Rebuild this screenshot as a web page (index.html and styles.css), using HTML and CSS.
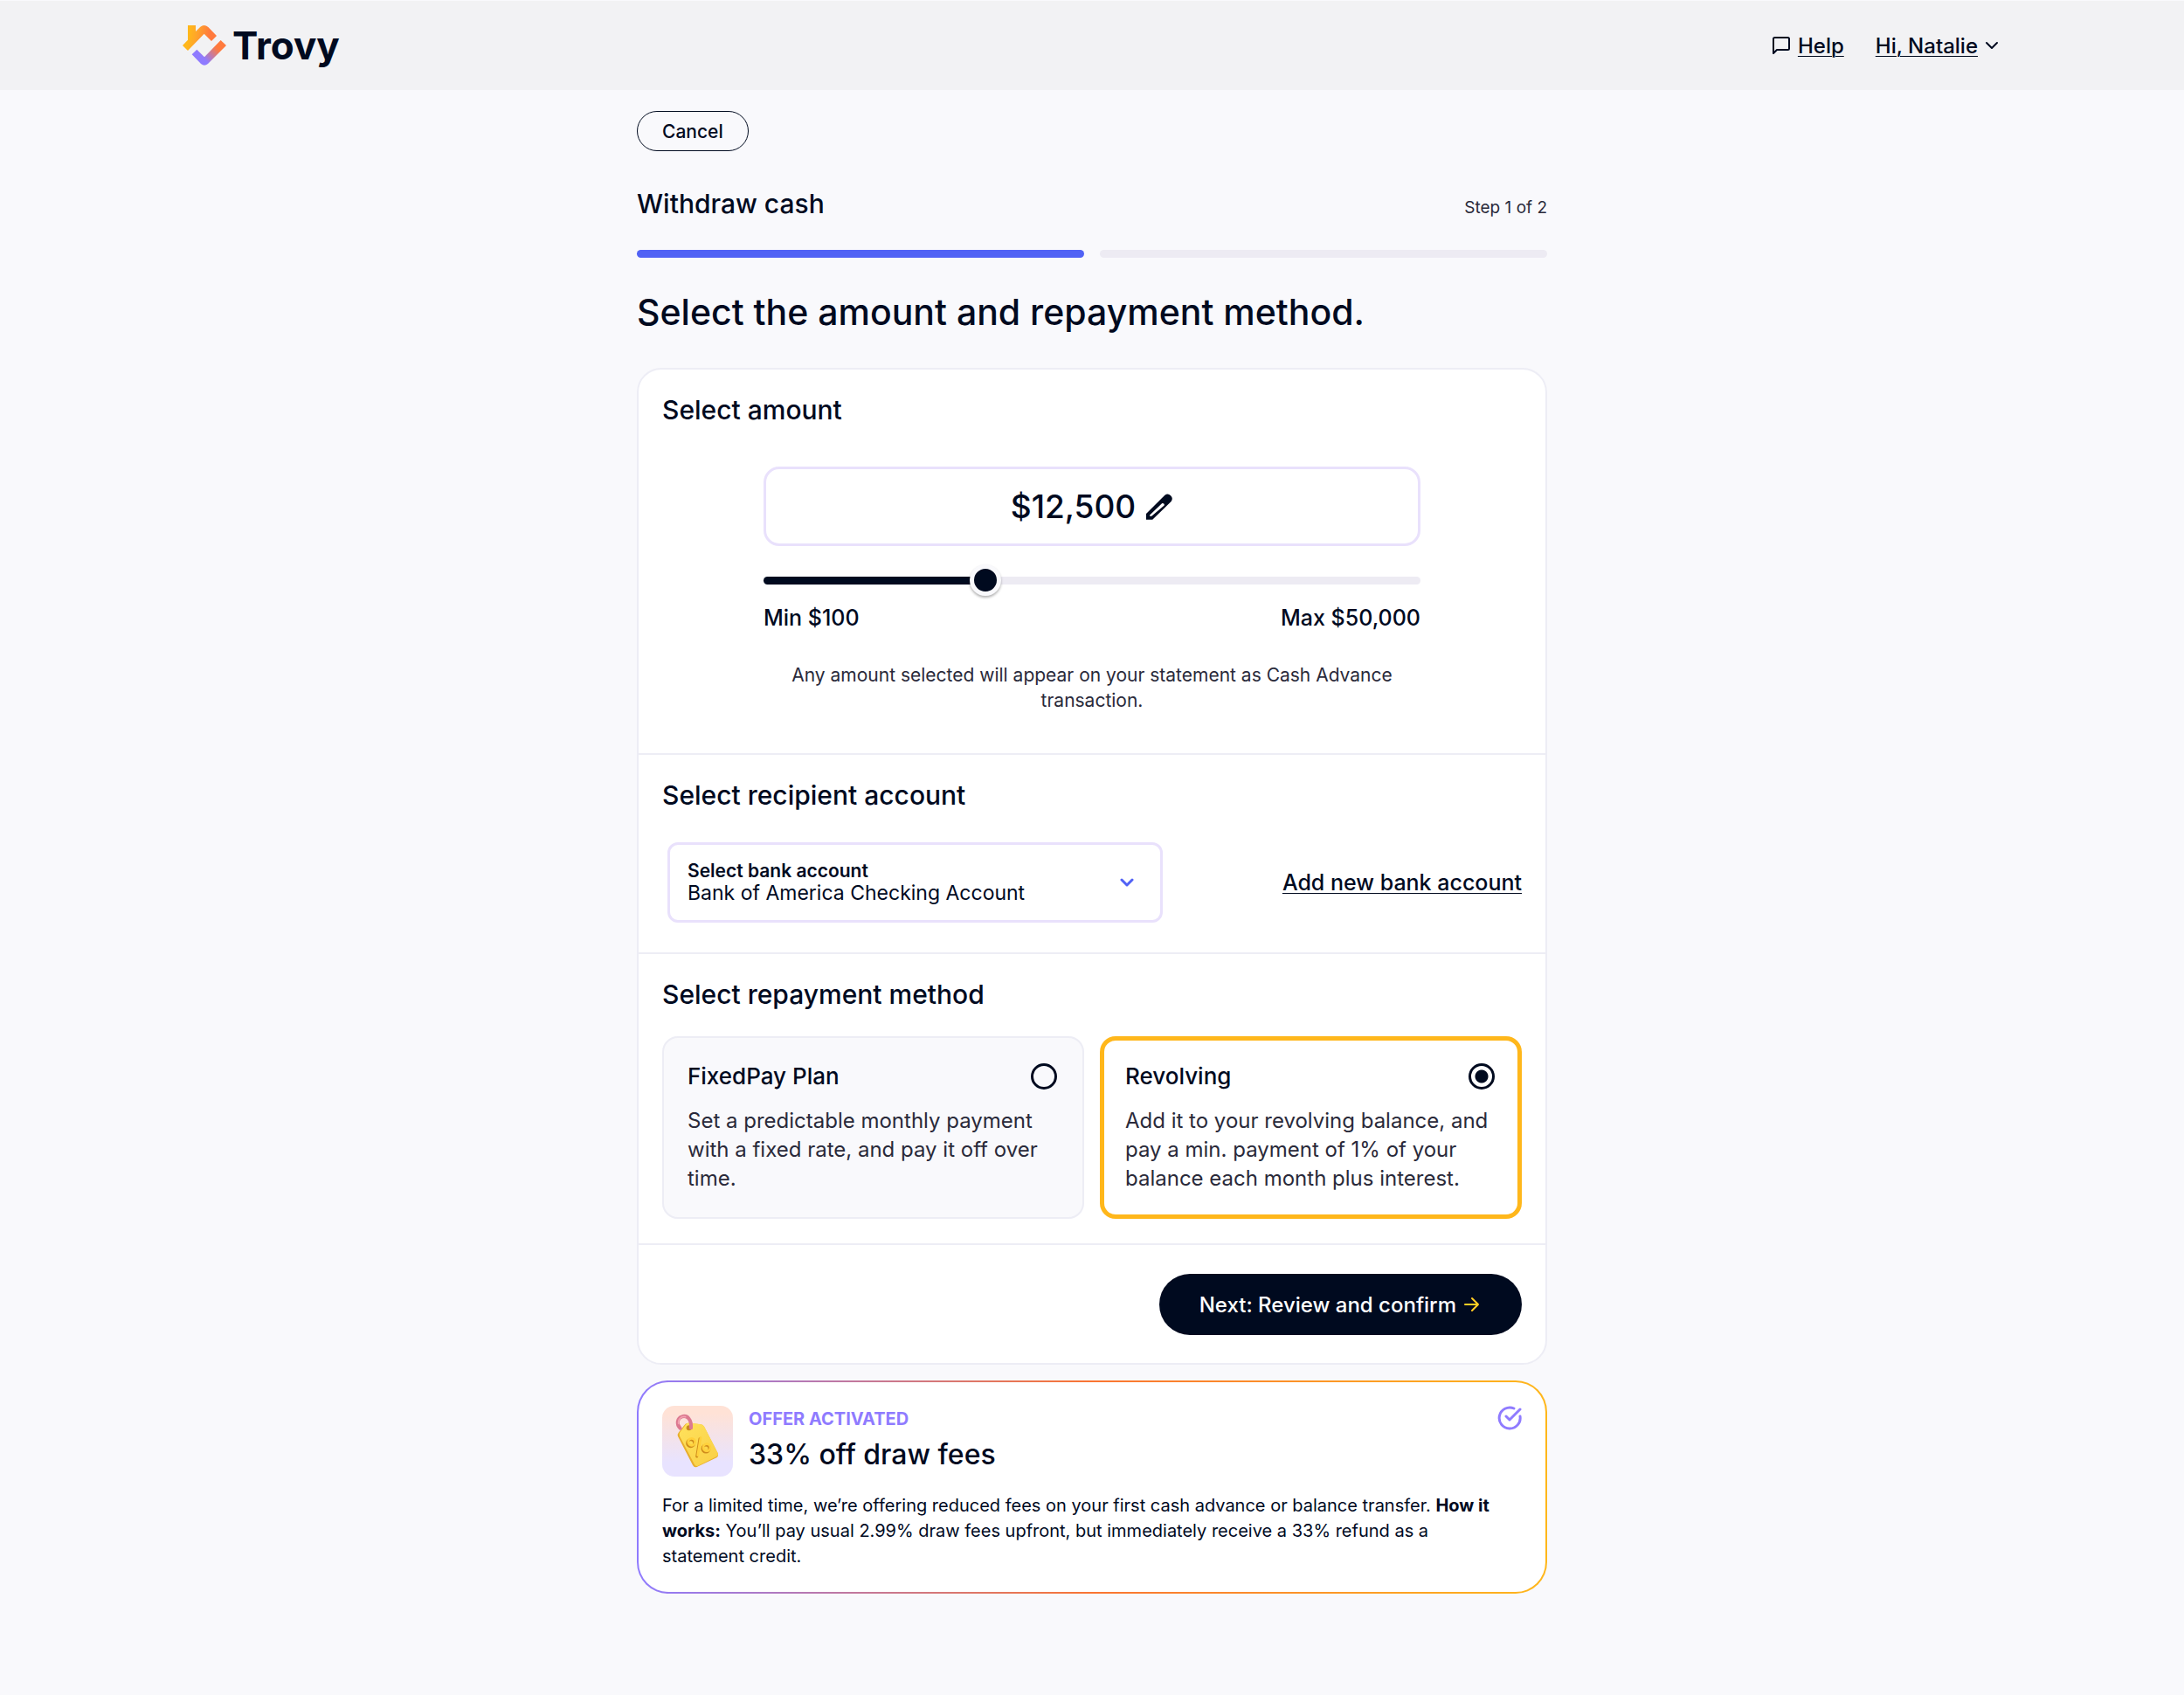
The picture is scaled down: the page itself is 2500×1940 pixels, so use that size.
FILE: index.html
```html
<!DOCTYPE html>
<html lang="en">
<head>
    <title>Trovy - Withdraw cash</title>
    <meta charset="utf-8">
    <meta name="viewport" content="width=device-width, initial-scale=1">
    <link rel="stylesheet" href="styles.css">
</head>
<body>
    <header class="header">
        <div class="header-inner">
            <a class="logo" href="#">
                <svg width="50" height="46" viewBox="57 86 150 138" aria-hidden="true">
                    <defs>
                        <linearGradient id="roof" gradientUnits="userSpaceOnUse" x1="80" y1="110" x2="165" y2="125">
                            <stop offset="0" stop-color="#ffb71b"/>
                            <stop offset="0.3" stop-color="#ffa52a"/>
                            <stop offset="0.8" stop-color="#ff7a3d"/>
                        </linearGradient>
                        <linearGradient id="base" gradientUnits="userSpaceOnUse" x1="130" y1="200" x2="172" y2="160">
                            <stop offset="0" stop-color="#8f7bff"/>
                            <stop offset="1" stop-color="#ff7a3d"/>
                        </linearGradient>
                    </defs>
                    <path fill="url(#roof)" d="M75 86h27v21l16-16q13-10 27 1l29 30-18 18-25-25-56 58-18-18 18-19z"/>
                    <path fill="url(#base)" d="M89 186l17-17 26 26 56-58 19 18-63 63q-12 10-24 0z"/>
                </svg>
                <span>Trovy</span>
            </a>
            <nav class="nav">
                <a class="nav-link" href="#">
                    <svg width="22" height="22" viewBox="0 0 22 22" fill="none" stroke="currentColor" stroke-width="2" stroke-linejoin="round" aria-hidden="true">
                        <path d="M2 20V3.500Q2 2 3.500 2H18.500Q20 2 20 3.500V14.500Q20 16 18.500 16H6z"/>
                    </svg>
                    <span>Help</span>
                </a>
                <a class="nav-link" href="#">
                    <span>Hi, Natalie</span>
                    <svg width="16" height="10" viewBox="0 0 16 10" fill="none" stroke="currentColor" stroke-width="2" stroke-linecap="round" stroke-linejoin="round" aria-hidden="true">
                        <path d="M2 2l6 6 6-6"/>
                    </svg>
                </a>
            </nav>
        </div>
    </header>

    <main class="page">
        <button class="cancel" type="button">Cancel</button>
        <div class="step">
            <h2 class="heading">Withdraw cash</h2>
            <span class="step-count">Step 1 of 2</span>
        </div>
        <div class="progress">
            <span class="bar bar-done"></span>
            <span class="bar"></span>
        </div>
        <h1 class="title">Select the amount and repayment method.</h1>

        <form class="card">
            <section class="section">
                <h2 class="heading">Select amount</h2>
                <div class="amount">
                    <label class="amount-box">
                        <input class="amount-input" type="text" value="$12,500" aria-label="Amount">
                        <svg width="31" height="31" viewBox="0 0 90 90" fill="currentColor" fill-rule="evenodd" aria-hidden="true">
                            <path d="M0 89V70L62 8a15 15 0 0 1 21 21L21 89zM12 78h6L60 42Q62 34 53 35L12 74z"/>
                        </svg>
                    </label>
                    <input class="range" type="range" min="0" max="100" value="33" style="--fill: 33%" aria-label="Amount slider">
                    <div class="limits">
                        <span>Min $100</span>
                        <span>Max $50,000</span>
                    </div>
                    <p class="note">Any amount selected will appear on your statement as Cash Advance transaction.</p>
                </div>
            </section>

            <section class="section">
                <h2 class="heading">Select recipient account</h2>
                <div class="recipient">
                    <div class="bank">
                        <div class="bank-field">
                            <label for="bank">Select bank account</label>
                            <select id="bank">
                                <option>Bank of America Checking Account</option>
                            </select>
                        </div>
                        <svg width="16" height="10" viewBox="0 0 16 10" fill="none" stroke="currentColor" stroke-width="3" stroke-linecap="round" stroke-linejoin="round" aria-hidden="true">
                            <path d="M2 2l6 6 6-6"/>
                        </svg>
                    </div>
                    <a class="add-bank" href="#">Add new bank account</a>
                </div>
            </section>

            <section class="section">
                <h2 class="heading">Select repayment method</h2>
                <div class="methods">
                    <label class="method">
                        <span class="method-top">
                            <span>FixedPay Plan</span>
                            <input class="radio" type="radio" name="method">
                        </span>
                        <span class="method-text">Set a predictable monthly payment with a fixed rate, and pay it off over time.</span>
                    </label>
                    <label class="method method-active">
                        <span class="method-top">
                            <span>Revolving</span>
                            <input class="radio" type="radio" name="method" checked>
                        </span>
                        <span class="method-text">Add it to your revolving balance, and pay a min. payment of 1% of your balance each month plus interest.</span>
                    </label>
                </div>
            </section>

            <div class="actions">
                <button class="next" type="button">
                    Next: Review and confirm
                    <svg width="18" height="18" viewBox="0 0 18 18" fill="none" stroke="#ffcf24" stroke-width="2" stroke-linecap="round" stroke-linejoin="round" aria-hidden="true">
                        <path d="M1 9h15M9 2l7 7-7 7"/>
                    </svg>
                </button>
            </div>
        </form>

        <section class="offer">
            <div class="offer-top">
                <svg class="offer-img" viewBox="0 0 243 243" aria-hidden="true">
                    <defs>
                        <linearGradient id="tile" x1="0" y1="0" x2="0" y2="1">
                            <stop offset="0.1" stop-color="#ffe2d6"/>
                            <stop offset="0.8" stop-color="#e8e3ff"/>
                        </linearGradient>
                        <linearGradient id="tag" x1="0" y1="0" x2="1" y2="1">
                            <stop offset="0" stop-color="#ffe25c"/>
                            <stop offset="1" stop-color="#f9cf45"/>
                        </linearGradient>
                    </defs>
                    <rect width="243" height="243" rx="42" fill="url(#tile)"/>
                    <path d="M56 92L76 67q4-7 12-8l44 5q8 1 12 8l47 91q4 9-4 15l-68 32q-9 3-14-6L54 105q-3-7 2-13z" fill="#e8ae2c"/>
                    <path d="M61 91L80 66q4-7 12-8l42 6q7 1 11 8l46 90q3 8-4 12l-64 32q-8 3-12-4L60 104q-3-7 1-13z" fill="url(#tag)"/>
                    <circle cx="92" cy="76" r="9" fill="#c88624"/>
                    <path d="M62 77C48 64 51 42 68 37C86 31 101 47 99 76" fill="none" stroke="#dc7990" stroke-width="12" stroke-linecap="round"/>
                    <path d="M56 61C54 45 67 34 80 38" fill="none" stroke="#f3a2b2" stroke-width="5" stroke-linecap="round"/>
                    <g fill="none" stroke-linecap="round">
                        <g stroke="#cf8c1c" stroke-width="9" transform="translate(-3 4)">
                            <circle cx="101" cy="124" r="12"/>
                            <circle cx="153" cy="143" r="12"/>
                            <path d="M132 109l-10 61"/>
                        </g>
                        <g stroke="#ffd13c" stroke-width="8">
                            <circle cx="101" cy="124" r="12"/>
                            <circle cx="153" cy="143" r="12"/>
                            <path d="M132 109l-10 61"/>
                        </g>
                    </g>
                </svg>
                <div class="offer-head">
                    <p class="offer-tag">OFFER ACTIVATED</p>
                    <h2 class="offer-title">33% off draw fees</h2>
                </div>
                <svg class="offer-check" viewBox="0 0 28 28" fill="none" stroke="currentColor" stroke-width="3" stroke-linecap="round" stroke-linejoin="round" aria-hidden="true">
                    <path d="M19 3A12 12 0 1 0 26 12"/>
                    <path d="M10 12l4 4L26 4"/>
                </svg>
            </div>
            <p class="offer-text">For a limited time, we’re offering reduced fees on your first cash advance or balance transfer. <strong>How it works:</strong> You’ll pay usual 2.99% draw fees upfront, but immediately receive a 33% refund as a statement credit.</p>
        </section>
    </main>
</body>
</html>
```

FILE: styles.css
```css
* {
    box-sizing: border-box;
}
body {
    margin: 0;
    background: #f9f9fc;
    color: #000a1f;
    font-family: "Inter", "Liberation Sans", sans-serif;
    font-size: 20px;
    line-height: 29px;
}
h1, h2, p {
    margin: 0;
    font-weight: 500;
}
a {
    color: inherit;
}
input, select, button {
    margin: 0;
    font: inherit;
    color: inherit;
}
svg {
    display: block;
    flex-shrink: 0;
}

/* header */
.header {
    height: 103px;
    padding: 0 24px;
    border-top: 1px solid #f9f9fc;
    background: #f2f2f4;
}
.header-inner {
    display: flex;
    align-items: center;
    justify-content: space-between;
    max-width: 2082px;
    height: 100%;
    margin: 0 auto;
}
.logo {
    display: flex;
    align-items: center;
    gap: 7px;
    font-size: 44px;
    font-weight: 700;
    line-height: 50px;
    text-decoration: none;
}
.nav {
    display: flex;
    gap: 36px;
    padding-right: 3px;
}
.nav-link {
    display: flex;
    align-items: center;
    gap: 8px;
    font-size: 24px;
    font-weight: 500;
    text-decoration: none;
}
.nav-link span {
    text-decoration: underline;
    text-decoration-thickness: 1px;
    text-underline-offset: 3px;
}

/* page */
.page {
    max-width: 1042px;
    margin: 0 auto;
    padding: 24px 0;
}
.cancel {
    display: block;
    height: 46px;
    padding: 0 28px;
    border: 1px solid #000a1f;
    border-radius: 23px;
    background: none;
    font-size: 21px;
    font-weight: 500;
}
.heading {
    font-size: 30px;
    line-height: 40px;
}
.step {
    display: flex;
    align-items: baseline;
    justify-content: space-between;
    margin-top: 40px;
}
.step-count {
    color: #2a2a3a;
    font-size: 19px;
}
.progress {
    display: grid;
    grid-template-columns: 1fr 1fr;
    gap: 18px;
    margin-top: 33px;
}
.bar {
    height: 9px;
    border-radius: 5px;
    background: #edebf3;
}
.bar-done {
    background: #5162f5;
}
.title {
    margin-top: 34px;
    font-size: 41px;
    line-height: 56px;
}

/* form card */
.card {
    margin-top: 36px;
    border: 2px solid #ededf5;
    border-radius: 28px;
    background: #fff;
}
.section {
    padding: 26px 27px 28px;
    border-bottom: 2px solid #ededf5;
}
.amount {
    max-width: 752px;
    margin: 45px auto 18px;
}
.amount-box {
    display: flex;
    align-items: center;
    justify-content: center;
    gap: 12px;
    height: 91px;
    border: 3px solid #e9e1fc;
    border-radius: 18px;
}
.amount-input {
    field-sizing: content;
    padding: 0;
    border: 0;
    background: none;
    font-size: 37px;
    font-weight: 500;
    line-height: 56px;
}
.range {
    display: block;
    width: 100%;
    height: 36px;
    margin-top: 21px;
    background: none;
    appearance: none;
}
.range::-webkit-slider-runnable-track {
    height: 9px;
    border-radius: 5px;
    background: linear-gradient(to right, #000a1f var(--fill), #edebf3 var(--fill));
}
.range::-webkit-slider-thumb {
    width: 36px;
    height: 36px;
    margin-top: -14px;
    border: 5px solid #f9f9fc;
    border-radius: 50%;
    background: #000a1f;
    box-shadow: 0 2px 3px rgba(0, 0, 0, 0.3);
    appearance: none;
}
.limits {
    display: flex;
    justify-content: space-between;
    margin-top: 9px;
    font-size: 25px;
    font-weight: 500;
    line-height: 32px;
}
.note {
    margin-top: 35px;
    color: #2a2a3a;
    font-size: 21px;
    font-weight: 400;
    text-align: center;
}

/* bank account */
.recipient {
    display: flex;
    align-items: center;
    justify-content: space-between;
    margin: 34px 0 6px 6px;
}
.bank {
    display: flex;
    align-items: center;
    width: 567px;
    height: 92px;
    padding: 0 30px 0 20px;
    border: 3px solid #e9e1fc;
    border-radius: 12px;
    color: #5162f5;
}
.bank-field {
    flex: 1;
    color: #000a1f;
}
.bank-field label {
    display: block;
    font-size: 21px;
    font-weight: 600;
    line-height: 24px;
}
.bank-field select {
    display: block;
    width: 100%;
    padding: 0;
    border: 0;
    background: none;
    font-size: 23px;
    line-height: 26px;
    appearance: none;
}
.add-bank {
    font-size: 25px;
    font-weight: 500;
    text-decoration-thickness: 1px;
    text-underline-offset: 3px;
}

/* repayment method */
.methods {
    display: grid;
    grid-template-columns: 1fr 1fr;
    gap: 18px;
    margin-top: 28px;
}
.method {
    padding: 29px 29px 30px;
    border-radius: 18px;
    background: #f9f9fc;
    box-shadow: inset 0 0 0 2px #ededf5;
}
.method-active {
    background: #fff;
    box-shadow: inset 0 0 0 5px #ffb71b;
}
.method-top {
    display: flex;
    align-items: center;
    justify-content: space-between;
    padding-right: 2px;
    font-size: 26px;
    font-weight: 500;
    line-height: 34px;
}
.method-text {
    display: block;
    margin-top: 17px;
    color: #2a2a3a;
    font-size: 24px;
    line-height: 33px;
}
.radio {
    width: 30px;
    height: 30px;
    border: 3px solid #000a1f;
    border-radius: 50%;
    appearance: none;
}
.radio:checked {
    background: radial-gradient(circle, #000a1f 7px, transparent 8px);
}
.actions {
    display: flex;
    justify-content: flex-end;
    padding: 33px 27px 32px;
}
.next {
    display: flex;
    align-items: center;
    gap: 9px;
    height: 70px;
    padding: 0 48px 0 46px;
    border: 0;
    border-radius: 35px;
    background: #000a1f;
    color: #fff;
    font-size: 24px;
    font-weight: 500;
}

/* offer */
.offer {
    margin-top: 18px;
    padding: 27px 27px 26px;
    border: 2px solid transparent;
    border-radius: 36px;
    background:
        linear-gradient(#fff, #fff) padding-box,
        linear-gradient(to right, #8f7bff, #fa7532 50%, #ffb71b) border-box;
}
.offer-top {
    display: flex;
    align-items: center;
    gap: 18px;
}
.offer-img {
    width: 81px;
    height: 81px;
}
.offer-head {
    flex: 1;
}
.offer-tag {
    color: #8f7bff;
    font-weight: 700;
    line-height: 26px;
}
.offer-title {
    margin-top: 5px;
    font-size: 32px;
    line-height: 46px;
}
.offer-check {
    align-self: flex-start;
    width: 28px;
    height: 28px;
    color: #8f7bff;
}
.offer-text {
    margin-top: 19px;
    padding-right: 18px;
    font-weight: 400;
}
```
